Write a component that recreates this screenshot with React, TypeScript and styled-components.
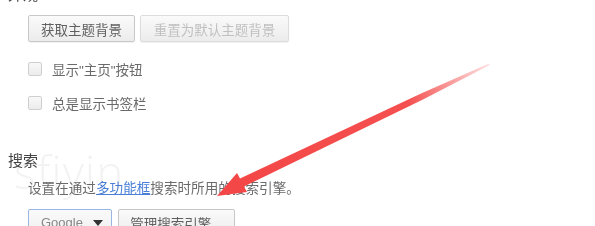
import React from "react";
import styled, { createGlobalStyle } from "styled-components";

const Global = createGlobalStyle`
  html, body { margin: 0; padding: 0; background: #fff; overflow: hidden; }
  body { font-family: "Liberation Sans", "Noto Sans CJK SC", sans-serif; }
`;

const Page = styled.div`
  position: relative;
  width: 595px;
  height: 226px;
  overflow: hidden;
  background: #fff;
`;

const Heading = styled.div<{ $top: number }>`
  margin: ${(p) => p.$top}px 0 0 8px;
  height: 20px;
  line-height: 20px;
  font-size: 15px;
  color: #444;
  filter: blur(0.35px);
`;

const Section = styled.div<{ $top: number }>`
  margin: ${(p) => p.$top}px 0 0 28px;
  display: flex;
  flex-direction: column;
`;

const ButtonRow = styled.div`
  display: flex;
  gap: 5px;
  align-items: center;
`;

const Button = styled.div<{ $disabled?: boolean; $w: number }>`
  box-sizing: border-box;
  width: ${(p) => p.$w}px;
  height: 27px;
  border: 1px solid ${(p) => (p.$disabled ? "#dcdcdc" : "#c8c8c8")};
  border-radius: 2px;
  background: linear-gradient(#fafafa, #ececec);
  box-shadow: 0 1px 1px rgba(0, 0, 0, 0.06);
  display: flex;
  align-items: center;
  justify-content: center;
  font-size: 13.5px;
  color: ${(p) => (p.$disabled ? "#c0c0c0" : "#606060")};
  filter: blur(0.4px);
  white-space: nowrap;
`;

const CheckRow = styled.label<{ $top: number }>`
  display: flex;
  align-items: center;
  gap: 10px;
  margin-top: ${(p) => p.$top}px;
  height: 16px;
  font-size: 13.5px;
  color: #6a6a6a;
  filter: blur(0.4px);
`;

const Box = styled.span`
  box-sizing: border-box;
  width: 14px;
  height: 14px;
  border: 1px solid #cfcfcf;
  border-radius: 2px;
  background: linear-gradient(#f8f8f8, #ececec);
`;

const Desc = styled.div`
  margin: 8px 0 0 28px;
  height: 20px;
  line-height: 20px;
  font-size: 13.6px;
  color: #6a6a6a;
  filter: blur(0.4px);
`;

const Link = styled.span`
  color: #4a7fd8;
  text-decoration: underline;
`;

const Controls = styled.div`
  margin: 10px 0 0 28px;
  display: flex;
  gap: 6px;
`;

const Select = styled.div`
  box-sizing: border-box;
  width: 84px;
  height: 27px;
  border: 1px solid #9ab6e4;
  border-radius: 2px;
  background: linear-gradient(#fafafa, #efefef);
  display: flex;
  align-items: center;
  padding: 0 8px 0 12px;
  justify-content: space-between;
  font-size: 13px;
  color: #888;
  filter: blur(0.4px);
`;

const Caret = styled.span`
  width: 0;
  height: 0;
  border-left: 5px solid transparent;
  border-right: 5px solid transparent;
  border-top: 6px solid #333;
`;

const Watermark = styled.div`
  position: absolute;
  left: 14px;
  top: 140px;
  font-family: "Open Sans", "Liberation Sans", sans-serif;
  font-size: 46px;
  font-weight: 300;
  color: rgba(0, 0, 0, 0.05);
  letter-spacing: 1px;
  pointer-events: none;
  filter: blur(0.4px);
`;

const ArrowSvg = styled.svg`
  position: absolute;
  left: 0;
  top: 0;
  pointer-events: none;
  filter: blur(0.6px);
`;

export default function App() {
  return (
    <Page>
      <Global />
      <Heading $top={-15}>外观</Heading>
      <Section $top={10}>
        <ButtonRow>
          <Button $w={107}>获取主题背景</Button>
          <Button $w={149} $disabled>
            重置为默认主题背景
          </Button>
        </ButtonRow>
        <CheckRow $top={19}>
          <Box />
          显示"主页"按钮
        </CheckRow>
        <CheckRow $top={18}>
          <Box />
          总是显示书签栏
        </CheckRow>
      </Section>
      <Heading $top={40}>搜索</Heading>
      <Desc>
        设置在通过<Link>多功能框</Link>搜索时所用的搜索引擎。
      </Desc>
      <Controls>
        <Select>
          Google
          <Caret />
        </Select>
        <Button $w={117}>管理搜索引擎...</Button>
      </Controls>
      <Watermark>sfiyin</Watermark>
      <ArrowSvg width="595" height="226" viewBox="0 0 595 226">
        <defs>
          <linearGradient id="fade" x1="217" y1="196" x2="490" y2="64" gradientUnits="userSpaceOnUse">
            <stop offset="0" stopColor="#f44646" stopOpacity="1" />
            <stop offset="0.7" stopColor="#f44646" stopOpacity="0.95" />
            <stop offset="1" stopColor="#f44646" stopOpacity="0.15" />
          </linearGradient>
        </defs>
        <polygon
          points="217,196 237,173 240,178.5 420,94 489,63.5 489.8,65 423,99.5 244,186.5 247,192"
          fill="url(#fade)"
        />
      </ArrowSvg>
    </Page>
  );
}
